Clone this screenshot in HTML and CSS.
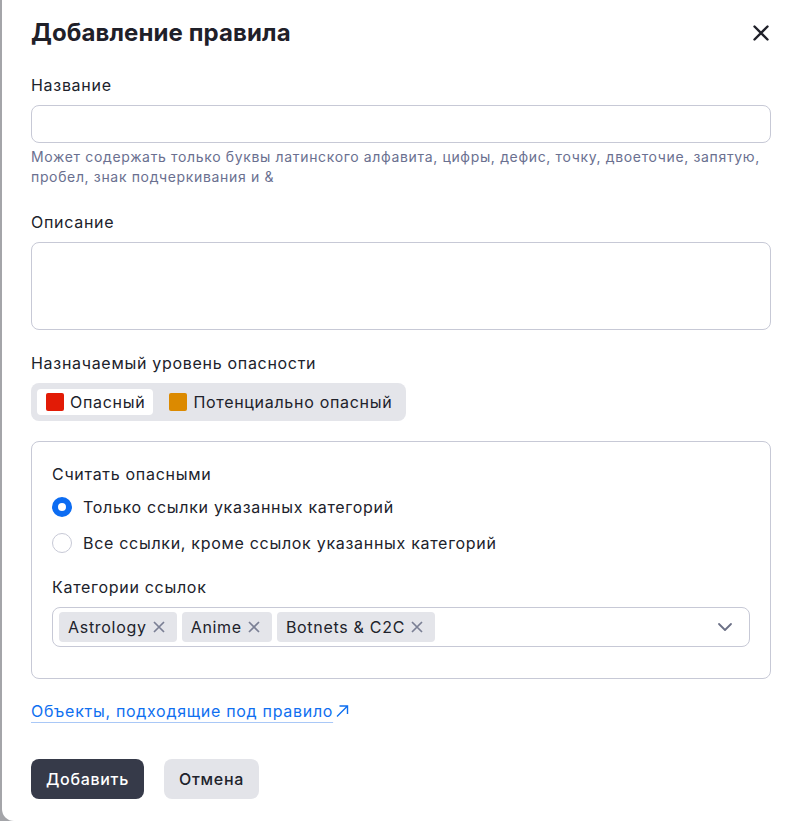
FILE: index.html
```html
<!DOCTYPE html>
<html lang="ru">
<head>
<meta charset="utf-8">
<title>Добавление правила</title>
<link rel="stylesheet" href="styles.css">
</head>
<body>
<div class="modal">
  <div class="modal-header">
    <h1 class="modal-title">Добавление правила</h1>
    <button class="close-btn" aria-label="Закрыть">
      <svg width="20" height="20" viewBox="0 0 20 20"><path d="M3.5 3.5 L16.5 16.5 M16.5 3.5 L3.5 16.5" stroke="#1f2029" stroke-width="2.4" stroke-linecap="round" fill="none"/></svg>
    </button>
  </div>

  <div class="field field-first">
    <div class="label">Название</div>
    <div class="input"></div>
    <div class="helper">Может содержать только буквы латинского алфавита, цифры, дефис, точку, двоеточие, запятую, пробел, знак подчеркивания и &amp;</div>
  </div>

  <div class="field field-desc">
    <div class="label">Описание</div>
    <div class="input textarea"></div>
  </div>

  <div class="field field-level">
    <div class="label">Назначаемый уровень опасности</div>
    <div class="segmented">
      <div class="segment segment-active"><span class="swatch swatch-red"></span>Опасный</div>
      <div class="segment"><span class="swatch swatch-orange"></span>Потенциально опасный</div>
    </div>
  </div>

  <div class="panel">
    <div class="label">Считать опасными</div>
    <div class="radios">
      <div class="radio-row"><span class="radio radio-checked"></span>Только ссылки указанных категорий</div>
      <div class="radio-row"><span class="radio"></span>Все ссылки, кроме ссылок указанных категорий</div>
    </div>
    <div class="label label-cat">Категории ссылок</div>
    <div class="select">
      <div class="tags">
        <span class="tag">Astrology<svg class="tag-x" width="14" height="14" viewBox="0 0 14 14"><path d="M2 2 L12 12 M12 2 L2 12" stroke="#7a7f94" stroke-width="1.7" fill="none"/></svg></span>
        <span class="tag">Anime<svg class="tag-x" width="14" height="14" viewBox="0 0 14 14"><path d="M2 2 L12 12 M12 2 L2 12" stroke="#7a7f94" stroke-width="1.7" fill="none"/></svg></span>
        <span class="tag">Botnets &amp; C2C<svg class="tag-x" width="14" height="14" viewBox="0 0 14 14"><path d="M2 2 L12 12 M12 2 L2 12" stroke="#7a7f94" stroke-width="1.7" fill="none"/></svg></span>
      </div>
      <svg class="chevron" width="16" height="10" viewBox="0 0 16 10"><path d="M2 2 L8 8 L14 2" stroke="#6b7086" stroke-width="1.8" fill="none" stroke-linecap="round" stroke-linejoin="round"/></svg>
    </div>
  </div>

  <div class="link-row">
    <a class="link" href="#"><span class="link-text">Объекты, подходящие под правило</span><svg class="link-arrow" width="14" height="14" viewBox="0 0 14 14"><path d="M2 12.5 L12.5 2 M4.5 2 H12.5 V10" stroke="#0f6ff0" stroke-width="1.4" fill="none"/></svg></a>
  </div>

  <div class="actions">
    <button class="btn btn-primary">Добавить</button>
    <button class="btn btn-secondary">Отмена</button>
  </div>
</div>
</body>
</html>
```

FILE: styles.css
```css
html, body {
  margin: 0;
  padding: 0;
}

body {
  background: #a4a5a9;
  font-family: Inter, "Noto Sans", "Liberation Sans", sans-serif;
  color: #20222b;
  font-size: 16px;
  line-height: 24px;
  letter-spacing: 0.7px;
}

.modal {
  margin-left: 2px;
  height: 821px;
  box-sizing: border-box;
  background: #ffffff;
  border-bottom-left-radius: 12px;
  padding: 17px 25px 0 29px;
}

.modal-header {
  display: flex;
  justify-content: space-between;
  align-items: center;
  height: 32px;
}

.modal-title {
  margin: 0;
  font-size: 24px;
  line-height: 32px;
  font-weight: 700;
  color: #1f2029;
  letter-spacing: 0.1px;
}

.close-btn {
  border: 0;
  background: none;
  padding: 0;
  width: 20px;
  height: 20px;
  display: flex;
}

.field {
  margin-top: 22px;
}

.field-first {
  margin-top: 24px;
}

.field-desc {
  margin-top: 23px;
}

.field-level {
  margin-top: 21px;
}

.label {
  font-size: 16px;
  line-height: 24px;
  color: #20222b;
  margin-bottom: 8px;
}

.input {
  height: 38px;
  box-sizing: border-box;
  border: 1px solid #c7c9d6;
  border-radius: 8px;
  background: #fff;
}

.textarea {
  height: 88px;
}

.helper {
  margin-top: 4px;
  font-size: 14px;
  line-height: 20px;
  color: #6a7090;
  letter-spacing: 0.65px;
}

.segmented {
  display: inline-flex;
  gap: 7px;
  padding: 6px;
  background: #e4e5ea;
  border-radius: 8px;
}

.segment {
  display: flex;
  align-items: center;
  height: 26px;
  padding: 0 8px 0 9px;
  border-radius: 4px;
  gap: 6px;
  color: #20222b;
}

.segment-active {
  background: #ffffff;
}

.swatch {
  width: 18px;
  height: 18px;
  border-radius: 2px;
}

.swatch-red {
  background: #e21b06;
}

.swatch-orange {
  background: #dc8a00;
}

.panel {
  margin-top: 20px;
  border: 1px solid #c7c9d6;
  border-radius: 8px;
  padding: 20px 20px 31px 20px;
}

.panel .label {
  margin-bottom: 0;
}

.radios {
  margin-top: 9px;
  display: flex;
  flex-direction: column;
  gap: 12px;
}

.radio-row {
  display: flex;
  align-items: center;
  gap: 11px;
  height: 24px;
}

.radio {
  width: 20px;
  height: 20px;
  box-sizing: border-box;
  border-radius: 50%;
  border: 1px solid #c7c9d6;
  background: #fff;
}

.radio-checked {
  border: 6px solid #0c6cf2;
}

.panel .label-cat {
  margin-top: 20px;
  margin-bottom: 8px;
}

.select {
  height: 40px;
  box-sizing: border-box;
  border: 1px solid #c7c9d6;
  border-radius: 8px;
  padding: 4px 16px 4px 6px;
  display: flex;
  align-items: center;
  justify-content: space-between;
}

.tags {
  display: flex;
  gap: 5px;
}

.tag {
  display: inline-flex;
  align-items: center;
  height: 30px;
  padding: 0 11px 0 9px;
  gap: 5px;
  background: #e4e5ea;
  border-radius: 4px;
  color: #20222b;
}

.chevron {
  display: block;
}

.link-row {
  margin-top: 20px;
  line-height: 24px;
}

.link {
  color: #0f6ff0;
  text-decoration: none;
  display: inline-flex;
  align-items: center;
  gap: 2px;
}

.link-text {
  text-decoration: underline;
  text-decoration-color: #a9c8f7;
  text-underline-offset: 5px;
  text-decoration-thickness: 1px;
}

.actions {
  margin-top: 36px;
  display: flex;
  gap: 20px;
}

.btn {
  height: 40px;
  border: 0;
  border-radius: 8px;
  padding: 0 15px;
  font-family: Inter, "Noto Sans", "Liberation Sans", sans-serif;
  font-size: 16px;
  font-weight: 500;
  letter-spacing: 0.7px;
}

.btn-primary {
  background: #363a49;
  color: #ffffff;
}

.btn-secondary {
  background: #e3e4e9;
  color: #20222b;
}
```
